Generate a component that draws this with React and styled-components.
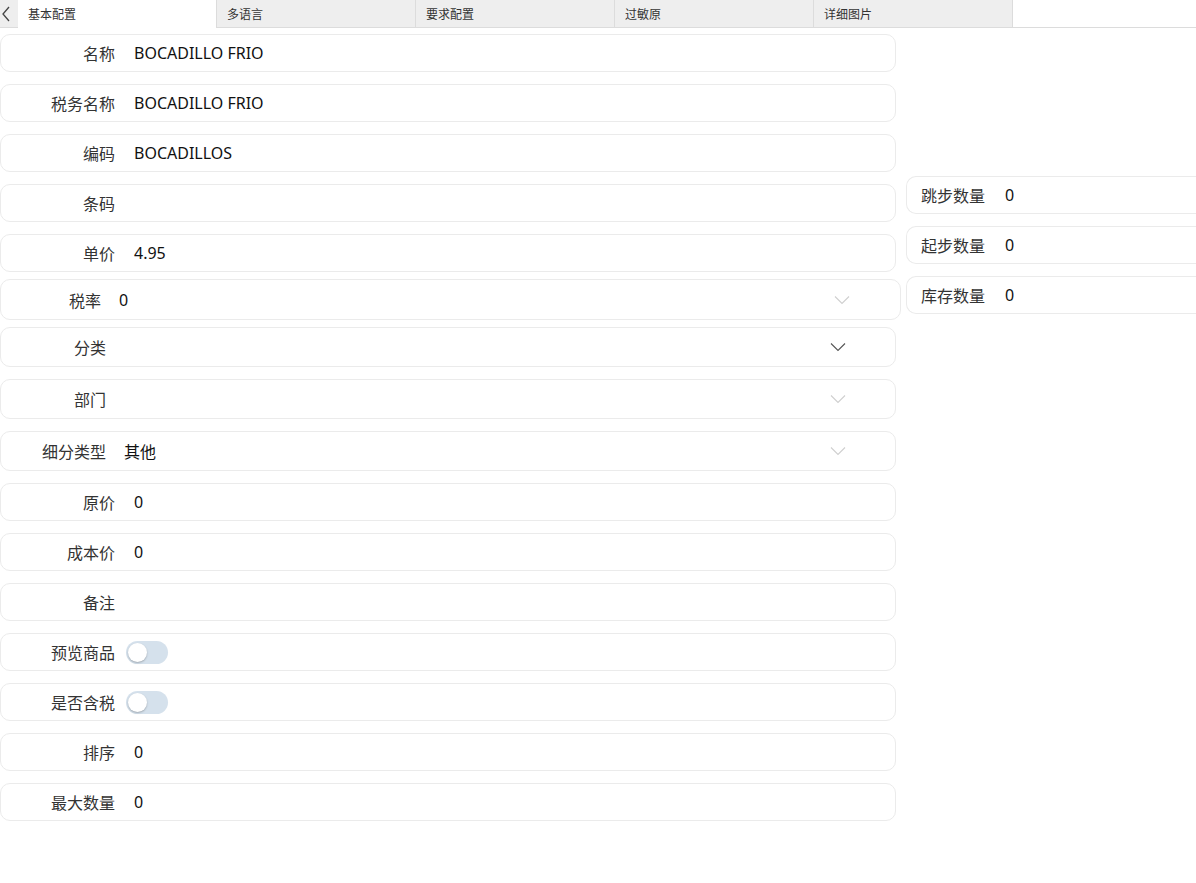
import React from "react";
import styled, { createGlobalStyle } from "styled-components";

const GlobalStyle = createGlobalStyle`
  body {
    margin: 0;
    background: #fff;
    font-family: "Noto Sans", "Noto Sans CJK SC", sans-serif;
    color: #222;
  }
`;

const TabBar = styled.div`
  display: flex;
  height: 28px;
  background: #fff;
  border-bottom: 1px solid #dcdcdc;
  box-sizing: border-box;
`;

const BackButton = styled.div`
  width: 18px;
  background: #eeeeee;
  display: flex;
  align-items: center;
  justify-content: flex-start;
  padding-left: 1px;
  box-sizing: border-box;
  color: #444;
`;

const Tab = styled.div`
  width: 199px;
  box-sizing: border-box;
  padding-left: 10px;
  display: flex;
  align-items: center;
  font-size: 12px;
  color: #333;
  background: ${(p) => (p.$active ? "#fff" : "#eeeeee")};
  border-right: 1px solid #dcdcdc;
  margin-bottom: ${(p) => (p.$active ? "-1px" : "0")};
`;

const Content = styled.div`
  display: flex;
  align-items: flex-start;
  gap: 10px;
`;

const LeftColumn = styled.div`
  width: 896px;
  padding-top: 6px;
`;

const RightColumn = styled.div`
  flex: 1;
  padding-top: 148px;
  display: flex;
  flex-direction: column;
  gap: 12px;
`;

const Row = styled.div`
  display: flex;
  align-items: center;
  box-sizing: border-box;
  height: ${(p) => p.$h ?? 38}px;
  width: ${(p) => p.$w ?? 896}px;
  margin-top: ${(p) => p.$mt ?? 12}px;
  border: 1px solid #ebebeb;
  border-radius: 10px;
  position: relative;
  background: #fff;
`;

const Label = styled.div`
  width: ${(p) => p.$w ?? 114}px;
  text-align: right;
  font-family: "Noto Sans CJK SC", sans-serif;
  font-size: 16px;
  color: #333;
  flex-shrink: 0;
`;

const Value = styled.div`
  margin-left: ${(p) => p.$gap ?? 19}px;
  font-size: 16px;
  color: #111;
  font-family: "Noto Sans", "Noto Sans CJK SC", sans-serif;
`;

const Chevron = styled.svg`
  position: absolute;
  right: ${(p) => p.$right ?? 48}px;
  top: 50%;
  transform: translateY(-50%);
`;

const SideRow = styled.div`
  display: flex;
  align-items: center;
  box-sizing: border-box;
  height: 38px;
  padding-left: 14px;
  border: 1px solid #ebebeb;
  border-right: none;
  border-radius: 10px 0 0 10px;
`;

const SideLabel = styled.div`
  font-family: "Noto Sans CJK SC", sans-serif;
  font-size: 16px;
  color: #333;
  width: 84px;
`;

const Toggle = styled.div`
  margin-left: 11px;
  width: 42px;
  height: 23px;
  border-radius: 12px;
  background: #d5e1ec;
  position: relative;
  &::after {
    content: "";
    position: absolute;
    left: 2px;
    top: 2px;
    width: 19px;
    height: 19px;
    border-radius: 50%;
    background: #fff;
    box-shadow: 0 1px 2px rgba(0, 0, 0, 0.25);
  }
`;

function Arrow({ dark, right }) {
  return (
    <Chevron $right={right} width="16" height="9" viewBox="0 0 16 9">
      <path
        d="M1 1 L8 8 L15 1"
        fill="none"
        stroke={dark ? "#555" : "#cfcfcf"}
        strokeWidth="1.1"
      />
    </Chevron>
  );
}

const tabs = ["基本配置", "多语言", "要求配置", "过敏原", "详细图片"];

export default function App() {
  return (
    <>
      <GlobalStyle />
      <TabBar>
        <BackButton>
          <svg width="10" height="16" viewBox="0 0 10 16">
            <path d="M8 1 L2 8 L8 15" fill="none" stroke="#444" strokeWidth="1.3" />
          </svg>
        </BackButton>
        {tabs.map((t, i) => (
          <Tab key={t} $active={i === 0}>
            {t}
          </Tab>
        ))}
      </TabBar>
      <Content>
        <LeftColumn>
          <Row $mt={0}>
            <Label>名称</Label>
            <Value>BOCADILLO FRIO</Value>
          </Row>
          <Row>
            <Label>税务名称</Label>
            <Value>BOCADILLO FRIO</Value>
          </Row>
          <Row>
            <Label>编码</Label>
            <Value>BOCADILLOS</Value>
          </Row>
          <Row>
            <Label>条码</Label>
          </Row>
          <Row>
            <Label>单价</Label>
            <Value>4.95</Value>
          </Row>
          <Row $mt={7} $h={41} $w={901}>
            <Label $w={100}>税率</Label>
            <Value $gap={18}>0</Value>
            <Arrow right={50} />
          </Row>
          <Row $mt={7} $h={40}>
            <Label $w={105}>分类</Label>
            <Arrow dark right={49} />
          </Row>
          <Row $h={40}>
            <Label $w={105}>部门</Label>
            <Arrow right={49} />
          </Row>
          <Row $h={40}>
            <Label $w={105}>细分类型</Label>
            <Value $gap={18}>其他</Value>
            <Arrow right={49} />
          </Row>
          <Row>
            <Label>原价</Label>
            <Value>0</Value>
          </Row>
          <Row>
            <Label>成本价</Label>
            <Value>0</Value>
          </Row>
          <Row>
            <Label>备注</Label>
          </Row>
          <Row>
            <Label>预览商品</Label>
            <Toggle />
          </Row>
          <Row>
            <Label>是否含税</Label>
            <Toggle />
          </Row>
          <Row>
            <Label>排序</Label>
            <Value>0</Value>
          </Row>
          <Row>
            <Label>最大数量</Label>
            <Value>0</Value>
          </Row>
        </LeftColumn>
        <RightColumn>
          <SideRow>
            <SideLabel>跳步数量</SideLabel>
            <Value $gap={0}>0</Value>
          </SideRow>
          <SideRow>
            <SideLabel>起步数量</SideLabel>
            <Value $gap={0}>0</Value>
          </SideRow>
          <SideRow>
            <SideLabel>库存数量</SideLabel>
            <Value $gap={0}>0</Value>
          </SideRow>
        </RightColumn>
      </Content>
    </>
  );
}
